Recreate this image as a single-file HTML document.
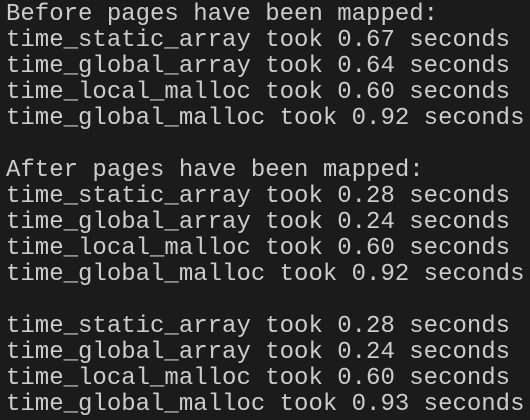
<!DOCTYPE html>
<html><head><style>
html,body{margin:0;padding:0;background:#1b1b1b;width:530px;height:420px;overflow:hidden}
pre{margin:0;padding:0 0 0 6px;font-family:"Liberation Mono",monospace;font-size:24px;line-height:26px;color:#cccccc;position:relative;top:2px}
</style></head><body><pre>Before pages have been mapped:
time_static_array took 0.67 seconds
time_global_array took 0.64 seconds
time_local_malloc took 0.60 seconds
time_global_malloc took 0.92 seconds

After pages have been mapped:
time_static_array took 0.28 seconds
time_global_array took 0.24 seconds
time_local_malloc took 0.60 seconds
time_global_malloc took 0.92 seconds

time_static_array took 0.28 seconds
time_global_array took 0.24 seconds
time_local_malloc took 0.60 seconds
time_global_malloc took 0.93 seconds</pre></body></html>
